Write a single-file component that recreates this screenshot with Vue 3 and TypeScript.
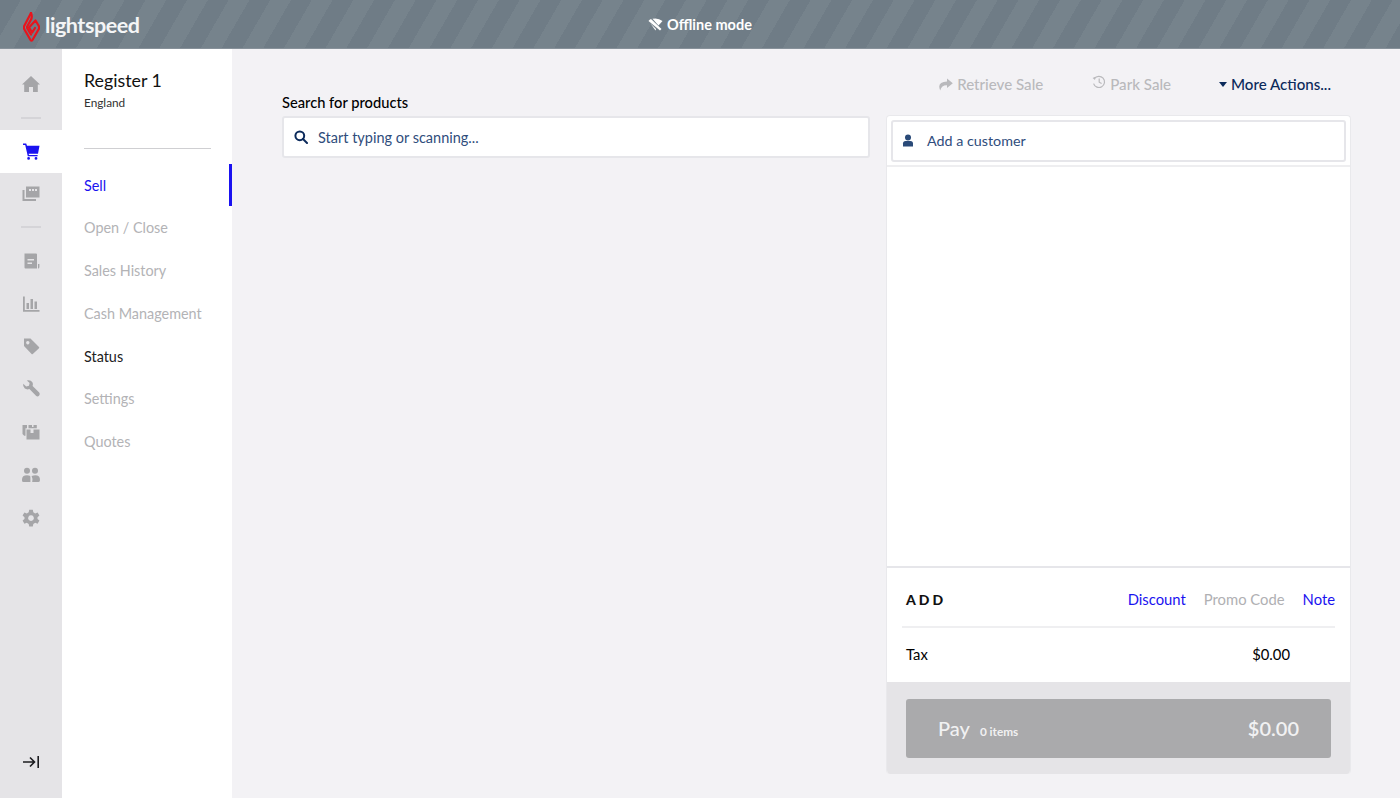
<script setup lang="ts">
interface RailIcon { id: string; active?: boolean; dividerAfter?: boolean }
const rail: RailIcon[] = [
  { id: 'home', dividerAfter: true },
  { id: 'cart', active: true },
  { id: 'pages', dividerAfter: true },
  { id: 'doc' },
  { id: 'chart' },
  { id: 'tag' },
  { id: 'wrench' },
  { id: 'boxes' },
  { id: 'people' },
  { id: 'gear' },
]
const nav = [
  { label: 'Sell', cls: 'active' },
  { label: 'Open / Close', cls: 'muted' },
  { label: 'Sales History', cls: 'muted' },
  { label: 'Cash Management', cls: 'muted' },
  { label: 'Status', cls: 'dark' },
  { label: 'Settings', cls: 'muted' },
  { label: 'Quotes', cls: 'muted' },
]
</script>

<template>
  <div class="app">
    <header class="top">
      <div class="logo">
        <svg width="17" height="30" viewBox="0 0 17 30" fill="none" stroke="#e8141c" stroke-width="2.2" stroke-linejoin="round" stroke-linecap="round">
          <path d="M8 1 L1.2 14 Q0.6 15.5 1.2 17 L7.5 28 Q8.5 29.5 9.5 28 L15.8 17 Q16.4 15.5 15.8 14 L12.5 8.5 L6 15.5 L9.2 20.5 L12 16" />
          <path d="M8 1 Q9.8 5 7.5 8.5 L4.2 14.5 Q3.8 15.5 4.4 16.5 L8 22.5" />
        </svg>
        <span class="logo-text">lightspeed</span>
      </div>
      <div class="offline">
        <svg width="15" height="13" viewBox="0 0 15 13" fill="#fff">
          <path d="M0.5 3 Q1 2 2 1.5 L3 1 L13.5 11 L12 12.5 Z" />
          <path d="M4.5 0.8 Q10 -0.5 14.5 3 L10.5 7.5 Z" />
          <path d="M2.5 5.5 L8 11 L7.5 12.5 Z" />
        </svg>
        <span>Offline mode</span>
      </div>
    </header>

    <div class="body">
      <aside class="rail">
        <template v-for="item in rail" :key="item.id">
          <div class="rail-item" :class="{ on: item.active }">
            <svg width="20" height="20" viewBox="0 0 20 20" fill="currentColor">
              <path v-if="item.id === 'home'" d="M10 2 L19 10.5 L16.8 10.5 L16.8 18 L12 18 L12 13 L8 13 L8 18 L3.2 18 L3.2 10.5 L1 10.5 Z" />
              <path v-else-if="item.id === 'cart'" d="M2 2.5 L5.2 2.5 L6 4.8 L18.5 4.8 L17 12.8 L7.6 12.8 L8 14 L16.6 14 L16.6 15.3 L6.8 15.3 L4.2 4 L2 4 Z M7.6 16 a1.4 1.4 0 1 1 0 2.8 a1.4 1.4 0 1 1 0 -2.8 Z M15 16 a1.4 1.4 0 1 1 0 2.8 a1.4 1.4 0 1 1 0 -2.8 Z" />
              <template v-else-if="item.id === 'pages'">
                <path fill-rule="evenodd" d="M5 2.5 H18.5 V13.5 H5 Z M8 5 v2 h2 v-2 Z M11 5 v2 h2 v-2 Z M14 5 v2 h2 v-2 Z" />
                <path d="M1.5 6 H3.5 V15 H15 V17 H1.5 Z" />
              </template>
              <path v-else-if="item.id === 'doc'" fill-rule="evenodd" d="M3.5 2.5 H15 Q16 2.5 16 3.5 V17.5 H4.5 Q3.5 17.5 3.5 16.5 Z M6.5 8 V9.6 H13 V8 Z M6.5 11.5 V13 H11 V11.5 Z M17 13 H18.4 V16 Q18.4 17.5 17 17.5 Z" />
              <path v-else-if="item.id === 'chart'" d="M2 2.5 H3.8 V16 H18.5 V17.8 H2 Z M5.5 9 H8 V15 H5.5 Z M9.5 5 H12 V15 H9.5 Z M13.5 7.5 H16 V15 H13.5 Z" />
              <path v-else-if="item.id === 'tag'" fill-rule="evenodd" d="M3 2.5 H9.5 L18 11 Q18.5 11.6 18 12.2 L11.8 18 Q11.2 18.5 10.6 18 L3 10 Z M6.8 5 a1.7 1.7 0 1 0 0.01 0 Z" />
              <path v-else-if="item.id === 'wrench'" d="M2.2 4.8 L5.2 7.6 L8 6.8 L8.6 4 L5.8 1.4 Q9.6 0.4 11.4 3.2 Q12.4 5 11.6 7 L18.2 13.6 Q19.4 15 18.2 16.6 Q16.6 18.2 15 16.8 L8.4 10 Q6 11 3.8 9.6 Q1.6 7.8 2.2 4.8 Z" />
              <template v-else-if="item.id === 'boxes'">
                <path d="M1.5 3 H6 V6.2 H4.5 V13.8 H3.2 L1.5 12 Z M7.5 3 H11 V5 H12.5 V3 H15.8 V6.2 H7.5 Z" />
                <path d="M5.5 7.5 H9.5 V11 H12.5 V7.5 H18.5 V17.5 H5.5 Z" />
              </template>
              <path v-else-if="item.id === 'people'" d="M6 2.8 a3 3 0 1 1 0 6 a3 3 0 1 1 0 -6 Z M14 2.8 a3 3 0 1 1 0 6 a3 3 0 1 1 0 -6 Z M1 14.5 Q1 10.2 6 10.2 Q9.8 10.2 9.4 12.5 V17 H2.5 Q1 17 1 15.5 Z M10.6 10.9 Q15.5 9.4 18 11.5 Q19 12.6 19 15 Q19 17 17.5 17 H11.2 Q12 13.5 10.6 10.9 Z" />
              <path v-else fill-rule="evenodd" d="M8.2 1.8 H11.8 L12.3 4.3 L14.2 5.4 L16.6 4.5 L18.4 7.6 L16.5 9.2 V11 L18.4 12.6 L16.6 15.7 L14.2 14.8 L12.3 15.9 L11.8 18.4 H8.2 L7.7 15.9 L5.8 14.8 L3.4 15.7 L1.6 12.6 L3.5 11 V9.2 L1.6 7.6 L3.4 4.5 L5.8 5.4 L7.7 4.3 Z M10 7.2 a2.9 2.9 0 1 0 0.01 0 Z" />
            </svg>
          </div>
          <div v-if="item.dividerAfter" class="rail-div"></div>
        </template>
        <div class="rail-bottom">
          <svg width="18" height="14" viewBox="0 0 18 14" fill="none" stroke="#1c1c20" stroke-width="1.6">
            <path d="M1 7 H12 M8 2.5 L12.5 7 L8 11.5" />
            <path d="M16.2 1 V13" />
          </svg>
        </div>
      </aside>

      <nav class="side">
        <div class="reg">
          <div class="reg-name">Register 1</div>
          <div class="reg-sub">England</div>
        </div>
        <div class="side-line"></div>
        <a v-for="n in nav" :key="n.label" class="nav-link" :class="n.cls">{{ n.label }}</a>
      </nav>

      <main class="main">
        <div class="actions">
          <span class="act off retrieve">
            <svg width="15" height="13" viewBox="0 0 15 13" fill="currentColor"><path d="M9 0.5 L14.8 5.3 L9 10 V7.2 Q3.5 7 2.2 12.5 Q-1.5 3.8 9 3.4 Z" /></svg>
            Retrieve Sale
          </span>
          <span class="act off park">
            <svg class="hist" width="14" height="14" viewBox="0 0 14 14" fill="none" stroke="currentColor" stroke-width="1.2"><path d="M2.4 3.6 A5.6 5.6 0 1 1 1.6 8.6" /><path d="M0.6 3 L3 5 L3.4 1.8 Z" fill="currentColor" stroke="none" /><path d="M7.2 3.6 V7.2 L9.6 8.6" /></svg>
            Park Sale
          </span>
          <span class="act on">
            <i class="caret"></i>
            More Actions...
          </span>
        </div>

        <div class="columns">
          <section class="left">
            <label class="search-label">Search for products</label>
            <div class="field">
              <svg class="field-ico" width="14" height="14" viewBox="0 0 14 14" fill="none" stroke="#0b2a5b" stroke-width="2"><circle cx="5.8" cy="5.8" r="4.4" /><path d="M9 9 L13 13" stroke-linecap="round" /></svg>
              <span>Start typing or scanning...</span>
            </div>
          </section>

          <section class="panel">
            <div class="customer-wrap">
              <div class="field customer">
                <svg class="field-ico" width="12" height="13" viewBox="0 0 12 13" fill="#2a4a78"><circle cx="6" cy="3.4" r="3" /><path d="M1 12.5 V9.5 Q1 7 3.6 7 H8.4 Q11 7 11 9.5 V12.5 Z" /></svg>
                <span>Add a customer</span>
              </div>
            </div>
            <div class="lines"></div>
            <div class="add">
              <div class="add-row">
                <span class="add-title">ADD</span>
                <span class="add-links">
                  <a class="blue">Discount</a>
                  <a class="grey">Promo Code</a>
                  <a class="blue">Note</a>
                </span>
              </div>
              <div class="tax-row">
                <span>Tax</span>
                <span class="tax-val">$0.00</span>
              </div>
            </div>
            <div class="pay-wrap">
              <button class="pay" type="button">
                <span class="pay-left"><span class="pay-word">Pay</span><span class="pay-items">0 items</span></span>
                <span class="pay-total">$0.00</span>
              </button>
            </div>
          </section>
        </div>
      </main>
    </div>
  </div>
</template>

<style>
html, body { margin: 0; padding: 0; }
</style>

<style scoped>
.app {
  width: 1400px;
  height: 798px;
  overflow: hidden;
  display: flex;
  flex-direction: column;
  font-family: Lato, "Liberation Sans", sans-serif;
  background: #f3f2f5;
  color: #000;
}
.top {
  height: 49px;
  flex: none;
  box-sizing: border-box;
  position: relative;
  display: flex;
  align-items: center;
  justify-content: center;
  border-bottom: 1px solid #87919a;
  background: repeating-linear-gradient(120deg, #6f7c86 0, #6f7c86 18px, #76838c 18px, #76838c 36px);
  color: #fff;
}
.logo {
  position: absolute;
  left: 23px;
  top: 11px;
  display: flex;
  align-items: center;
  gap: 5px;
}
.logo-text {
  font-size: 21.5px;
  line-height: 28px;
  font-weight: 700;
  letter-spacing: -0.45px;
  margin-bottom: 4px;
  color: #f4f5f6;
}
.offline {
  display: flex;
  align-items: center;
  gap: 4px;
  font-size: 14.5px;
  font-weight: 700;
}
.body { flex: 1; display: flex; min-height: 0; }
.rail {
  width: 62px;
  flex: none;
  background: #e5e4e7;
  display: flex;
  flex-direction: column;
  padding-top: 14px;
  box-sizing: border-box;
}
.rail-item {
  height: 42.8px;
  flex: none;
  display: flex;
  align-items: center;
  justify-content: center;
  color: #a5a5a8;
}
.rail-item.on { background: #fff; color: #1a12f0; }
.rail-div {
  height: 2px;
  flex: none;
  width: 20px;
  margin: 11px auto;
  background: #d5d4d8;
}
.rail-bottom {
  margin-top: auto;
  height: 50px;
  display: flex;
  justify-content: center;
  padding-top: 7px;
  box-sizing: border-box;
}
.side {
  width: 170px;
  flex: none;
  background: #fff;
  display: flex;
  flex-direction: column;
  box-sizing: border-box;
  padding-top: 20px;
}
.reg { padding-left: 22px; }
.reg-name { font-size: 17.8px; line-height: 22px; color: #111; }
.reg-sub { font-size: 11.8px; line-height: 16px; margin-top: 4px; color: #333; }
.side-line {
  height: 1px;
  background: #cfcfd2;
  margin: 37px 21px 14.5px 22px;
}
.nav-link {
  height: 42.8px;
  line-height: 44.4px;
  padding-left: 22px;
  font-size: 14.4px;
  box-sizing: border-box;
}
.nav-link.active { color: #1a12f0; border-right: 3px solid #1a12f0; }
.nav-link.muted { color: #b3b3b6; }
.nav-link.dark { color: #222; }
.main {
  flex: 1;
  min-width: 0;
  box-sizing: border-box;
  padding: 25px 49px 24px 50px;
  display: flex;
  flex-direction: column;
}
.actions {
  height: 20px;
  display: flex;
  justify-content: flex-end;
  align-items: center;
  font-size: 15.1px;
  font-weight: 500;
  padding-right: 20px;
  flex: none;
}
.act { display: inline-flex; align-items: center; gap: 4px; }
.act.off { color: #b9b9bc; }
.retrieve { margin-right: 49px; }
.park { margin-right: 48px; }
.act.on { color: #0b2a5b; }
.hist { margin-top: -4px; }
.caret {
  width: 0;
  height: 0;
  border-left: 4.5px solid transparent;
  border-right: 4.5px solid transparent;
  border-top: 5px solid #0b2a5b;
}
.columns { flex: 1; display: flex; gap: 16px; min-height: 0; }
.left { width: 588px; flex: none; }
.search-label {
  display: block;
  font-size: 14.7px;
  font-weight: 500;
  line-height: 18px;
  margin-top: -1px;
  margin-bottom: 5px;
}
.field {
  height: 42px;
  box-sizing: border-box;
  background: #fff;
  border: 2px solid #e6e6ea;
  border-radius: 3px;
  display: flex;
  align-items: center;
  font-size: 14.5px;
  color: #2f4d7c;
  padding-left: 10px;
}
.field-ico { margin-right: 10px; flex: none; }
.panel {
  flex: 1;
  min-width: 0;
  display: flex;
  flex-direction: column;
  background: #fff;
  border: 1px solid #e9e9ec;
  border-bottom: 0;
  border-radius: 4px;
  overflow: hidden;
  margin-top: 21px;
}
.customer-wrap {
  padding: 4px 4px 0;
  border-bottom: 2px solid #eeeef0;
  height: 51px;
  box-sizing: border-box;
  flex: none;
}
.customer { padding: 0 0 1px 9px; font-size: 14.3px; }
.customer .field-ico { margin-right: 13px; }
.lines { flex: 1; }
.add {
  flex: none;
  height: 116px;
  box-sizing: border-box;
  border-top: 2px solid #e6e6ea;
  padding: 0 15px;
  font-size: 14.8px;
}
.add-row {
  height: 60px;
  padding: 4px 0 0 4px;
  display: flex;
  justify-content: space-between;
  align-items: center;
  border-bottom: 2px solid #efeff1;
  box-sizing: border-box;
}
.add-title { font-weight: 900; font-size: 14px; letter-spacing: 3px; color: #111; }
.add-links { display: flex; gap: 18px; }
.blue { color: #1a12f0; }
.grey { color: #b0b0b3; }
.tax-row {
  display: flex;
  justify-content: space-between;
  align-items: center;
  height: 52px;
  padding: 0 45px 0 4px;
}
.pay-wrap {
  flex: none;
  height: 92px;
  box-sizing: border-box;
  background: #e5e4e7;
  padding: 17px 19px 16px 19px;
}
.pay {
  width: 100%;
  height: 59px;
  border: 0;
  border-radius: 3px;
  background: #aaaaac;
  color: #f1f1f2;
  font-family: inherit;
  display: flex;
  align-items: center;
  justify-content: space-between;
  padding: 0 32px 2px;
  box-sizing: border-box;
}
.pay-left { display: flex; align-items: baseline; gap: 10px; }
.pay-word { font-size: 20px; font-weight: 500; }
.pay-items { font-size: 11.8px; font-weight: 700; }
.pay-total { font-size: 20px; font-weight: 600; }
</style>
